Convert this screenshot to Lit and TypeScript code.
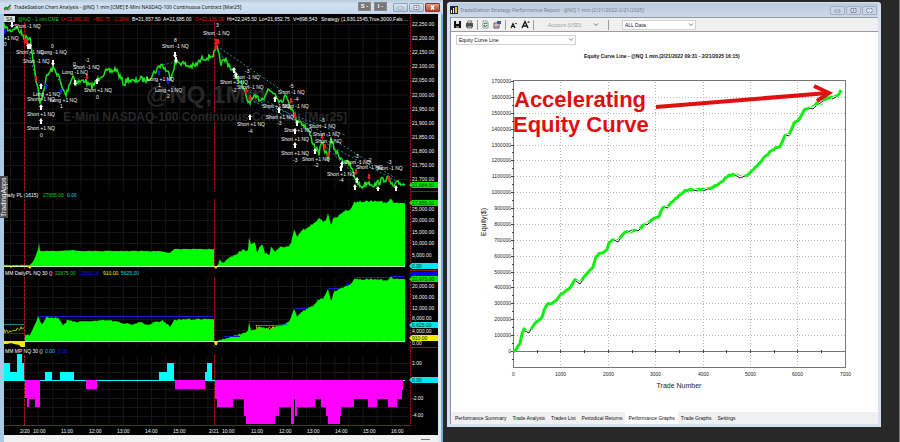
import { LitElement, html, svg, css } from "lit";
import { customElement } from "lit/decorators.js";

type Pt = [number, number];

const toPoints = (pts: Pt[]) => pts.map(([x, y]) => `${x.toFixed(1)},${y.toFixed(1)}`).join(" ");

/* Fills a coarse series with bar-to-bar noise, the same on every render. */
function densify(pts: Pt[], amp: number, step = 1): Pt[] {
  const out: Pt[] = [];
  let seed = 7;
  for (let i = 0; i < pts.length - 1; i++) {
    const [x0, y0] = pts[i];
    const [x1, y1] = pts[i + 1];
    for (let x = x0; x < x1; x += step) {
      seed = (seed * 16807) % 2147483647;
      const noise = (seed / 2147483647 - 0.5) * 2 * amp;
      out.push([x, y0 + ((y1 - y0) * (x - x0)) / (x1 - x0) + noise]);
    }
  }
  out.push(pts[pts.length - 1]);
  return out;
}

const area = (pts: Pt[], base: number, amp: number) => {
  const d = densify(pts, amp);
  return toPoints([[pts[0][0], base], ...d, [pts[pts.length - 1][0], base]]);
};

const PRICE: Pt[] = [
  [4, 26], [10, 31], [16, 27], [22, 34], [25, 38], [30, 37], [32, 50], [34, 65], [36, 80], [38, 90], [40, 104],
  [43, 92], [47, 76], [53, 68], [58, 74], [62, 88], [66, 95], [70, 82], [73, 76], [76, 82], [80, 82], [85, 80],
  [88, 85], [92, 86], [97, 82], [100, 76], [106, 72], [112, 71], [116, 69], [120, 77], [124, 84], [128, 79],
  [134, 82], [140, 79], [146, 80], [152, 75], [158, 68], [161, 64], [166, 70], [171, 77], [175, 63], [180, 62],
  [188, 66], [195, 66], [203, 58], [209, 57], [214, 54], [217, 49], [221, 63], [226, 60], [232, 70], [237, 76],
  [243, 88], [248, 102], [255, 98], [262, 99], [268, 90], [275, 93], [280, 101], [287, 96], [291, 108], [296, 118],
  [303, 124], [308, 130], [314, 145], [319, 153], [322, 143], [328, 158], [331, 140], [336, 152], [343, 160],
  [350, 165], [356, 180], [361, 187], [368, 182], [375, 185], [382, 180], [388, 178], [393, 187], [398, 183], [405, 184],
];

const DAILY_1: Pt[] = [
  [4, 265], [30, 265], [34, 260], [37, 252], [38, 250], [39, 243], [40, 251], [60, 251], [72, 250], [80, 251],
  [150, 251], [160, 251], [169, 253], [172, 251], [174, 249], [214, 249],
];
const DAILY_2: Pt[] = [
  [217, 266], [220, 260], [223, 263], [228, 258], [235, 255], [243, 249], [248, 251], [249, 237], [251, 245],
  [255, 242], [257, 252], [262, 244], [265, 253], [269, 255], [271, 247], [275, 252], [281, 246], [284, 247],
  [288, 246], [291, 243], [294, 230], [297, 236], [303, 230], [308, 228], [314, 222], [319, 219], [323, 222],
  [326, 220], [328, 213], [331, 225], [333, 219], [338, 216], [344, 211], [349, 211], [354, 203], [360, 201],
  [375, 201], [388, 202], [391, 199], [395, 203], [405, 203],
];
const MM_1: Pt[] = [
  [25, 335], [30, 335], [33, 328], [36, 322], [38, 316], [42, 325], [46, 317], [58, 318], [63, 325], [68, 320],
  [75, 322], [90, 321], [105, 320], [120, 322], [131, 325], [140, 322], [148, 325], [155, 322], [163, 321],
  [170, 326], [174, 320], [185, 319], [214, 319],
];
const MM_2: Pt[] = [
  [217, 341], [230, 337], [240, 334], [248, 331], [249, 322], [251, 331], [260, 327], [270, 329], [275, 327],
  [285, 324], [290, 320], [294, 309], [297, 316], [305, 310], [312, 306], [318, 300], [323, 299], [328, 289],
  [331, 301], [334, 292], [340, 288], [348, 286], [355, 279], [370, 279], [388, 280], [391, 277], [395, 279], [405, 279],
];

/* [from, to, edge] for each step of the market-position histogram */
const LONG_STEPS = [
  [4, 10, 363], [10, 17, 372], [17, 22, 354], [22, 24, 363], [45, 52, 372], [60, 74, 372], [159, 167, 372],
  [167, 174, 363], [205, 207, 372], [207, 212, 363],
];
const SHORT_STEPS = [
  [25, 27, 398], [27, 29, 407], [29, 35, 399], [35, 40, 407], [86, 97, 389], [175, 205, 389], [215, 217, 399],
  [217, 233, 407], [233, 244, 399], [244, 246, 416], [246, 275, 424], [275, 279, 416], [279, 291, 407],
  [291, 294, 424], [294, 295, 399], [295, 297, 416], [297, 315, 407], [315, 321, 399], [321, 326, 407], [326, 328, 416],
  [328, 340, 424], [340, 341, 416], [341, 354, 407], [354, 368, 399], [368, 377, 407], [377, 388, 399],
  [388, 397, 407], [397, 402, 399], [402, 403, 390],
];

const S = "Short -1 NQ";
const P = "Short +1 NQ";
const L = "Long +1 NQ";
const TRADES: [string, number, number][] = [
  [S, 14, 28], ["+1 NQ", 4, 40], ["0", 4, 46], [P, 16, 54], ["Long -1 NQ", 41, 54],
  ["0", 51, 48], [S, 23, 63], ["0", 73, 66], ["-1", 85, 62], [S, 73, 69], ["Long -1 NQ", 62, 74], [P, 84, 92],
  ["0", 96, 99], [L, 33, 96], [P, 27, 101], [L, 50, 102], ["1", 60, 108], [P, 27, 116], [P, 27, 130], ["0", 40, 137],
  [L, 147, 81], ["1", 158, 87], [L, 155, 92], ["2", 167, 98], ["8", 174, 42], [S, 162, 48],
  ["3", 216, 27], [S, 203, 35], ["-3", 245, 73], [S, 233, 79],
  [P, 220, 84], [S, 237, 89], ["-2", 232, 92], ["-5", 289, 88], [S, 278, 94],
  ["-4", 294, 101], [P, 262, 108], [S, 282, 108], [P, 237, 126], ["-4", 248, 133], [P, 266, 119], ["-3", 277, 125],
  [P, 284, 132], [P, 281, 141], [P, 281, 155], ["-3", 293, 162], [P, 302, 161], ["-2", 314, 167],
  ["-3", 320, 122], [S, 309, 128], [S, 313, 136], [S, 315, 143], [P, 327, 176], ["-4", 339, 182],
  ["-3", 354, 158], [S, 344, 164], ["-2", 367, 162], [S, 356, 169], ["-3", 387, 164], [S, 376, 170],
];

type Mark = [number, number, "up" | "down", string];
const MARKS: Mark[] = [
  [12, 25, "down", "w"], [5, 31, "up", "b"], [25, 41, "down", "r"], [27, 42, "down", "r"], [28, 46, "up", "w"],
  [30, 46, "up", "w"], [53, 63, "down", "w"], [36, 79, "down", "r"], [46, 86, "up", "b"], [61, 91, "up", "b"],
  [41, 86, "up", "w"], [41, 107, "up", "w"], [41, 121, "up", "w"], [75, 83, "down", "w"], [87, 77, "down", "r"],
  [97, 81, "up", "w"], [159, 72, "up", "b"], [168, 81, "up", "b"], [175, 55, "down", "w"], [176, 60, "down", "w"],
  [216, 42, "down", "r"], [218, 42, "down", "r"], [216, 47, "down", "r"], [234, 70, "up", "w"], [236, 75, "up", "w"],
  [246, 91, "down", "r"], [250, 98, "down", "r"], [250, 117, "up", "w"], [275, 99, "up", "w"], [279, 110, "up", "w"],
  [291, 101, "down", "r"], [295, 116, "down", "r"], [295, 131, "up", "w"], [295, 145, "up", "w"], [297, 123, "up", "w"],
  [315, 151, "up", "w"], [322, 137, "down", "r"], [325, 147, "down", "r"], [328, 155, "down", "r"], [342, 164, "up", "w"],
  [341, 168, "up", "w"], [356, 172, "down", "r"], [357, 180, "up", "w"], [355, 187, "up", "w"], [369, 177, "down", "r"],
  [389, 179, "down", "r"], [378, 189, "up", "w"], [396, 188, "up", "w"],
];
const MARK_PATHS = {
  up: "M0 -3 L2 0 H1 V3 H-1 V0 H-2 Z",
  down: "M0 3 L2 0 H1 V-3 H-1 V0 H-2 Z",
};

const QUOTE: [string, number, string][] = [
  ["@NQ - 1 min", 18, "g"], ["CME", 48, "g"], ["L=21,660.00", 61, "r"], ["-481.75", 93, "r"], ["-2.18%", 113, "r"],
  ["B=21,657.50", 132, "w"], ["A=21,685.00", 163, "w"], ["O=22,136.00", 195, "r"], ["Hi=22,245.50", 227, "w"],
  ["Lo=21,652.75", 259, "w"], ["V=698,543", 293, "w"], ["Strategy (1,930,1545,True,3000,Fals ...", 321, "w"],
];
const TIMES: [string, number][] = [
  ["2/20", 20], ["10:00", 33], ["11:00", 61], ["12:00", 89], ["13:00", 117], ["14:00", 145], ["15:00", 173],
  ["2/21", 209], ["10:00", 222], ["11:00", 251], ["12:00", 279], ["13:00", 307], ["14:00", 335], ["15:00", 363],
  ["16:00", 391],
];
const PRICES = [
  "22,250.00", "22,200.00", "22,150.00", "22,100.00", "22,050.00", "22,000.00", "21,950.00", "21,900.00",
  "21,850.00", "21,800.00", "21,750.00", "21,700.00",
];
const range = (n: number) => Array.from({ length: n }, (_, i) => i);

@customElement("chart-window")
class ChartWindow extends LitElement {
  static styles = css`
    :host { display: flex; flex-direction: column; position: relative; background: #f0f0f0; font-family: "Liberation Sans", Arial, sans-serif; }
    .title { display: flex; align-items: center; gap: 3px; height: 14px; padding: 0 3px 0 4px; box-sizing: border-box; background: linear-gradient(#b9cbdc, #d3e2f1 30%, #c3d6ea); color: #111; }
    .logo { width: 7px; height: 7px; flex: none; }
    h1 { flex: 1; margin: 0; font: 5px/14px "Noto Sans", "Open Sans", sans-serif; white-space: nowrap; overflow: hidden; }
    .tool { width: 13px; height: 9px; margin: 0 0 2px; padding: 0; border: 1px solid #888; background: #777; color: #fff; font: bold 6px/7px "Liberation Sans", sans-serif; }
    .controls { display: flex; gap: 1px; margin-left: 3px; }
    .controls button { display: grid; place-items: center; width: 15px; height: 9px; padding: 0; border: 1px solid #8fa1b5; border-radius: 1px; background: linear-gradient(#d9e6f3, #b4c8dd); }
    .controls .close { background: linear-gradient(#e09a88, #bf3c24); border-color: #80392c; }
    .controls svg { width: 7px; height: 5px; }
    .body { display: flex; flex-direction: column; background: #000; border-left: 4px solid #a9c9e6; border-right: 3px solid #dce9f5; box-shadow: 2px 0 #67b8de; margin-right: 2px; }
    .body > svg { display: block; width: 100%; }
    .status { flex: 1; min-height: 7px; margin-right: 2px; border-left: 4px solid #a9c9e6; border-right: 3px solid #dce9f5; box-shadow: 2px 0 #67b8de; display: flex; justify-content: flex-end; }
    .status i { width: 9px; height: 1px; margin: 4px 8px 0 0; background: #777; }
    .side { position: absolute; left: 0; top: 176px; width: 8px; height: 42px; padding: 0; border: 0; background: #4a4a4a; color: #fff; font: 7px/8px "Liberation Sans", sans-serif; writing-mode: vertical-rl; transform: rotate(180deg); white-space: nowrap; }
    text { font-size: 5px; fill: #f4f4f4; }
    .mark-big { font-size: 24px; font-weight: bold; fill: #282828; }
    .mark-small { font-size: 12px; font-weight: bold; fill: #282828; }
    .g { fill: #18d018; } .r { fill: #f01818; } .w { fill: #fff; } .b { fill: #1414ff; } .c { fill: #19d5e8; } .y { fill: #f0ea00; }
    .ink { fill: #003300; }
    .grid { stroke: #161616; stroke-width: 1; }
    .session { stroke: #b01414; stroke-width: 1; stroke-dasharray: 3 1; }
    .axis { stroke: #a01010; stroke-width: 1; }
    .dots { stroke-dasharray: 2 1; }
    .price { fill: none; stroke: #1fe01f; stroke-width: 1.5; }
    .fill { fill: #00ff00; }
    .base { stroke: #b9ffb9; stroke-width: 1; }
    .link { stroke: #2a8c98; stroke-width: 1; stroke-dasharray: 2 2; fill: none; }
    .blue { stroke: #1a1ad0; stroke-width: 1; fill: none; }
    .teal { stroke: #158a96; stroke-width: 1; fill: none; }
    .gold { stroke: #b5ad00; stroke-width: 1; fill: none; }
    .long { fill: #00ffff; } .short { fill: #ff00ff; }
    .tag-g { fill: #00e400; } .tag-c { fill: #00e5f2; } .tag-y { fill: #f2ee00; } .tag-b { fill: #0000e6; }
  `;

  private frame(top: number, bottom: number, rows: number[]) {
    return svg`
      ${range(28).map((i) => svg`<line class="grid" x1=${10.5 + i * 14.1} x2=${10.5 + i * 14.1} y1=${top + 9} y2=${bottom} />`)}
      ${rows.map((y) => svg`<line class="grid" x1="4" x2="408" y1=${y} y2=${y} />`)}
      ${[24.5, 214.5].map((x) => svg`<line class="session" x1=${x} x2=${x} y1=${top + 8} y2=${bottom} />`)}
      <line class="axis dots" x1="410.5" x2="410.5" y1=${top} y2=${bottom} />`;
  }

  private tag(y: number, cls: string, label: string) {
    return svg`<path class=${cls} d="M409 ${y} l3 -3 H438 v6 H412 Z" /><text class="ink" x="412" y=${y + 2}>${label}</text>`;
  }

  private scale(rows: [string, number][]) {
    return rows.map(([t, y]) => svg`<text x="412" y=${y + 2}>${t}</text>`);
  }

  private heading(y: number, parts: [string, number, string][]) {
    return parts.map(([t, x, c]) => svg`<text class=${c} x=${x} y=${y}>${t}</text>`);
  }

  render() {
    return html`
      <header class="title">
        <svg class="logo" viewBox="0 0 8 8"><path d="M0 6 L2 4 L4 5 L8 1" fill="none" stroke="#1b8a2c" stroke-width="2" /><path d="M0 7 L3 6 L5 7 L8 4" fill="none" stroke="#c02020" /></svg>
        <h1>TradeStation Chart Analysis - @NQ 1 min [CME] E-Mini NASDAQ-100 Continuous Contract [Mar25]</h1>
        <button class="tool" aria-label="Symbol link">S -</button>
        <button class="tool" aria-label="Interval link">I -</button>
        <div class="controls">
          <button aria-label="Minimize"><svg viewBox="0 0 7 5"><path d="M1 2h5v2h-5z" fill="#fff" stroke="#667" stroke-width=".5" /></svg></button>
          <button aria-label="Restore"><svg viewBox="0 0 7 5"><path d="M1 .5h5v4h-5z M3 2h1v1h-1z" fill="#fff" stroke="#667" stroke-width=".7" /></svg></button>
          <button class="close" aria-label="Close"><svg viewBox="0 0 7 5"><path d="M2 .5 L5 4.5 M5 .5 L2 4.5" stroke="#fff" stroke-width="1.3" /></svg></button>
        </div>
      </header>
      <div class="body">
        <svg viewBox="4 14 434 177">
          ${this.frame(14, 191, range(12).map((i) => 24.5 + i * 14.1))}
          <text class="mark-big" x="146" y="103">@NQ,1Min</text>
          <text class="mark-small" x="63" y="121">E-Mini NASDAQ-100 Continuous Contract [Mar25]</text>
          <rect x="4" y="16" width="11" height="6" fill="#d8d8d8" /><text x="6" y="21" class="ink">SA</text>
          ${this.heading(21, QUOTE)}
          <path class="link" d="M217 46 L290 96 M217 50 L262 103 L345 135 M243 88 L318 130 L395 178 M250 100 L300 122 L352 172 M320 140 L398 182 M25 38 L40 95 M159 66 L175 62 M53 68 L66 95" />
          <polyline class="price" points=${toPoints(densify(PRICE, 3))} />
          ${MARKS.map(([x, y, dir, c]) => svg`<path class=${c} d=${MARK_PATHS[dir]} transform="translate(${x} ${y})" />`)}
          ${TRADES.map(([t, x, y]) => svg`<text x=${x} y=${y}>${t}</text>`)}
          ${this.scale(PRICES.map((p, i): [string, number] => [p, 24 + Math.round(i * 14.1)]))}
          ${this.tag(185, "tag-g", "21,684.50")}
        </svg>
        <svg viewBox="4 191 434 78">
          ${this.frame(191, 269, [209.5, 220.5, 232.5, 243.5, 255.5])}
          <line class="axis" x1="410" x2="438" y1="191.5" y2="191.5" />
          ${this.heading(197, [["Daily PL (1615)", 4, "w"], ["27655.00", 43, "g"], ["0.00", 67, "c"]])}
          <polygon class="fill" points=${area(DAILY_1, 266, 0.4)} />
          <polygon class="fill" points=${area(DAILY_2, 266, 1.2)} />
          <line class="base" x1="4" x2="405" y1="266.5" y2="266.5" />
          <path class="y" d="M9 266h4l-2 2z M27 266h5l-2 3z M214 266h4l-2 3z" />
          ${this.scale([["25,000.00", 209], ["20,000.00", 220], ["15,000.00", 232], ["10,000.00", 243], ["5,000.00", 255]])}
          ${this.tag(203, "tag-g", "27,655.00")} ${this.tag(266, "tag-c", "0.00")}
        </svg>
        <svg viewBox="4 269 434 78">
          ${this.frame(269, 347, [286.5, 297.5, 308.5, 319.5, 330.5])}
          <line class="axis" x1="410" x2="438" y1="270.5" y2="270.5" />
          ${this.heading(275, [["MM DailyPL NQ 30 ()", 5, "w"], ["22675.00", 55, "g"], ["23505.00", 79, "b"], ["910.00", 103, "y"], ["5625.00", 121, "c"]])}
          <polygon class="fill" points=${area(MM_1, 341, 0.9)} />
          <polygon class="fill" points=${area(MM_2, 341, 0.9)} />
          <path class="blue" d="M4 333.5H24 M38 316.5H214 M224 336.5H240 M249 321.5H272 M295 308.5H307 M316 299.5H320 M328 288.5H340 M346 284.5H350 M355 277.5H390 V276.5H405" />
          <path class="teal" d="M4 324.5H24 M256 325.5H276 L288 324.5" />
          <polyline class="gold" points=${toPoints(densify([[4, 331], [9, 332], [13, 330], [18, 329], [24, 328]], 2, 1))} />
          <polyline class="gold" points=${toPoints(densify([[256, 327], [262, 330], [269, 328], [276, 328]], 2, 1))} />
          <path class="y" d="M4 341H25V347H21L19 345 14 344 11 343 7 344H4Z M214 341h4l-1 4h-2z" />
          <line class="base" x1="25" x2="405" y1="341.5" y2="341.5" />
          ${this.scale([["20,000.00", 286], ["16,000.00", 297], ["12,000.00", 308], ["8,000.00", 318], ["4,000.00", 331], ["0.00", 343]])}
          ${this.tag(275, "tag-b", "")} ${this.tag(279, "tag-g", "22,675.00")}
          ${this.tag(325, "tag-c", "6,625.00")} ${this.tag(338, "tag-y", "910.00")}
        </svg>
        <svg viewBox="4 347 434 88">
          ${this.frame(347, 425, [363.5, 372.5, 389.5, 398.5, 407.5, 416.5])}
          <line class="axis" x1="410" x2="438" y1="347.5" y2="347.5" />
          <line class="axis" x1="4" x2="411" y1="425.5" y2="425.5" />
          ${this.heading(353, [["MM MP NQ 30 ()", 5, "w"], ["0.00", 45, "c"], ["0.00", 58, "b"]])}
          <rect class="long" x="4" y="380" width="401" height="1" />
          ${LONG_STEPS.map(([a, b, y]) => svg`<rect class="long" x=${a} y=${y} width=${b - a} height=${381 - y} />`)}
          ${SHORT_STEPS.map(([a, b, y]) => svg`<rect class="short" x=${a} y="380" width=${b - a} height=${y - 380} />`)}
          ${this.scale([["2.00", 363], ["-2.00", 398], ["-4.00", 415]])}
          ${this.tag(380, "tag-c", "0.00")}
          ${TIMES.map(([t, x]) => svg`<text x=${x} y="433">${t}</text>`)}
        </svg>
      </div>
      <div class="status"><i></i></div>
      <button class="side">TradingApps</button>
    `;
  }
}

const EQUITY: Pt[] = [
  [513, 351], [516, 350], [520, 343], [522, 334], [524, 329], [528, 332], [531, 329], [535, 323], [538, 321],
  [542, 317], [545, 308], [548, 303], [552, 304], [557, 299], [561, 294], [565, 291], [569, 289], [575, 280],
  [580, 283], [583, 278], [586, 274], [588, 273], [593, 267], [596, 257], [599, 254], [603, 253], [607, 249],
  [609, 243], [613, 240], [618, 241], [623, 234], [627, 231], [629, 232], [635, 230], [638, 231], [643, 225],
  [647, 224], [653, 219], [659, 216], [663, 207], [667, 208], [673, 201], [679, 196], [685, 191], [690, 189],
  [697, 190], [704, 190], [711, 188], [719, 184], [727, 177], [733, 174], [740, 177], [748, 175], [755, 168], [762, 160],
  [772, 150], [780, 146], [785, 135], [789, 135], [794, 123], [798, 121], [805, 109], [811, 108], [815, 106],
  [817, 103], [821, 103], [824, 99], [829, 98], [834, 97], [839, 94], [841, 90],
];
const DRAWDOWNS: Pt[][] = [
  [[525, 331], [529, 333], [531, 329]], [[576, 281], [580, 284], [582, 281]], [[614, 240], [618, 242], [620, 239]],
  [[628, 232], [632, 230]], [[636, 230], [638, 231], [640, 229]], [[645, 224], [647, 225], [649, 223]],
  [[665, 207], [668, 208]], [[693, 190], [698, 191]], [[703, 191], [708, 189]], [[735, 175], [740, 178], [745, 176]],
  [[786, 135], [789, 136]], [[809, 108], [813, 109], [816, 106]], [[819, 104], [823, 101]], [[832, 99], [836, 97]],
];

const chevron = html`<svg class="chev" viewBox="0 0 6 4"><path d="M1 .5 L3 2.5 L5 .5" fill="none" stroke="#555" stroke-width=".8" /></svg>`;

@customElement("report-window")
class ReportWindow extends LitElement {
  static styles = css`
    :host { display: flex; flex-direction: column; box-sizing: border-box; border: 3px solid #d5e1f1; border-top-width: 1px; border-radius: 3px 3px 0 0; background: #fff; font-family: "Liberation Sans", Arial, sans-serif; font-size: 5px; color: #111; }
    .title { display: flex; align-items: center; gap: 2px; height: 14px; padding: 0 1px 0 0; background: linear-gradient(#bccbdc, #cbd9e8); }
    .logo { width: 8px; height: 8px; flex: none; }
    h1 { flex: 1; margin: 0; font: 5px/14px "Noto Sans", "Open Sans", sans-serif; color: #748293; white-space: nowrap; overflow: hidden; }
    .controls { display: flex; gap: 1px; }
    .controls button { display: grid; place-items: center; width: 15px; height: 9px; padding: 0; border: 1px solid #9eafc2; border-radius: 1px; background: #c9d7e6; }
    .controls svg { width: 7px; height: 5px; }
    .inner { display: flex; flex-direction: column; flex: 1; border-left: 1px solid #8a8f96; }
    .tools { display: flex; align-items: center; gap: 3px; height: 15px; box-sizing: border-box; padding-left: 2px; border-top: 1px solid #999; border-bottom: 1px solid #9b9b9b; background: #f0f0f0; }
    .tools button { width: 9px; height: 9px; padding: 0; border: 0; background: none; }
    .tools button svg { display: block; width: 9px; height: 9px; }
    .rule { width: 1px; height: 10px; background: #999; }
    .pick { position: relative; display: flex; }
    .pick select { appearance: none; width: 100%; height: 10px; margin: 0; padding: 0 8px 0 2px; border: 1px solid #d2d2d2; border-radius: 0; background: #fff; color: #111; font: 5px/8px "Liberation Sans", Arial, sans-serif; }
    .pick select:disabled { background: #f0f0f0; border-color: #ececec; color: #999; opacity: 1; }
    .chev { position: absolute; right: 2px; top: 3px; width: 6px; height: 4px; pointer-events: none; }
    .account { width: 56px; margin-left: 8px; margin-right: 4px; }
    .data { width: 74px; margin-left: 10px; }
    .view { width: 120px; margin: 3px 0 0 5px; }
    .plot { display: block; width: 100%; }
    nav { display: flex; align-items: center; height: 12px; background: #f0f0f0; padding-left: 1px; }
    nav button { height: 10px; padding: 0 3px; border: 0; background: none; color: #111; font: 5px/10px "Liberation Sans", Arial, sans-serif; }
    nav .on { height: 12px; background: #fff; line-height: 12px; }
    text { font-size: 5px; fill: #222; }
    .head { font-weight: bold; fill: #111; }
    .name { font-size: 7px; }
    .note { font-size: 22px; font-weight: bold; fill: #e01010; }
    .frame { fill: none; stroke: #777; stroke-width: 1; }
    .grid { stroke: #b4b4b4; stroke-width: 1; stroke-dasharray: 1 2; }
    .tick { stroke: #444; stroke-width: 1; }
    .curve { fill: none; stroke: #10f010; stroke-width: 3; stroke-linejoin: round; }
    .dip { fill: none; stroke: #222; stroke-width: 1; }
    .under { fill: none; stroke: #fff; stroke-width: 3; }
    .arrow { fill: none; stroke: #e01010; stroke-width: 4; }
    .end { text-anchor: end; } .mid { text-anchor: middle; }
  `;

  render() {
    const rowY = (i: number) => 81.5 + Math.round(i * 15.88);
    const colX = (i: number) => 513.5 + Math.round(i * 47.4);
    const tabs = ["Performance Summary", "Trade Analysis", "Trades List", "Periodical Returns", "Performance Graphs", "Trade Graphs", "Settings"];
    return html`
      <header class="title">
        <svg class="logo" viewBox="0 0 8 8"><rect width="8" height="8" fill="#223" /><path d="M1 7V4h1v3z M3 7V2h1v5z" fill="#fff" /><path d="M5 7V1h2v6z" fill="#e8d020" /></svg>
        <h1>TradeStation Strategy Performance Report - @NQ 1 min (2/21/2022-2/21/2025)</h1>
        <div class="controls">
          <button aria-label="Minimize"><svg viewBox="0 0 7 5"><path d="M1 2h5v2h-5z" fill="#eef" stroke="#667" stroke-width=".6" /></svg></button>
          <button aria-label="Maximize"><svg viewBox="0 0 7 5"><path d="M1 .5h5v4h-5z M3 2h1v1h-1z" fill="#eef" stroke="#667" stroke-width=".7" /></svg></button>
          <button aria-label="Close"><svg viewBox="0 0 7 5"><path d="M1 .5h1.500l1 1 1-1h1.500v4h-1.500l-1-1-1 1h-1.500z" fill="#eef" stroke="#667" stroke-width=".6" /></svg></button>
        </div>
      </header>
      <div class="inner">
        <div class="tools">
          <button aria-label="Save"><svg viewBox="0 0 9 9"><path d="M1 1h7v7H1z" fill="#111" /><path d="M3 1h3v3H3z" fill="#ddd" /><path d="M3 6h3v2H3z" fill="#776" /></svg></button>
          <button aria-label="Print"><svg viewBox="0 0 9 9"><path d="M2 3 3 1h4L6 3z" fill="#fff" stroke="#444" stroke-width=".7" /><path d="M1 3h7v4H1z" fill="#555" /><path d="M2 6h5v2H2z" fill="#bbb" stroke="#333" stroke-width=".6" /></svg></button>
          <span class="rule"></span>
          <button aria-label="Refresh"><svg viewBox="0 0 9 9"><path d="M2 1h4l1 1v6H2z" fill="#fff" stroke="#777" stroke-width=".7" /><path d="M3 4q2-2 3 0M6 5q-2 3-3 0" fill="none" stroke="#0a8a30" stroke-width="1.200" /></svg></button>
          <button aria-label="Properties"><svg viewBox="0 0 9 9"><path d="M1 3h5v5H1z" fill="#fff" stroke="#334" stroke-width=".9" /><path d="M4 1h4v3H4z" fill="#335a9a" /><path d="M2 5h3M2 6.500h3" stroke="#a33" stroke-width=".7" /></svg></button>
          <span class="rule"></span>
          <button aria-label="Smaller text"><svg viewBox="0 0 9 9"><path d="M2 8 4 3.500 6 8M3 6.500h2.500" fill="none" stroke="#111" stroke-width="1.100" /><path d="M6 3h2L7 4.500z" fill="#111" /></svg></button>
          <button aria-label="Larger text"><svg viewBox="0 0 9 9"><path d="M1 8 4 1.500 7 8M2.500 6h3.500" fill="none" stroke="#111" stroke-width="1.300" /><path d="M6 2.500h3L7.500 1z" fill="#111" /></svg></button>
          <span class="rule"></span>
          <span class="pick account"><select disabled aria-label="Account currency"><option>Account (USD)</option></select>${chevron}</span>
          <span class="rule"></span>
          <span class="pick data"><select aria-label="Data range"><option>ALL Data</option></select>${chevron}</span>
        </div>
        <span class="pick view"><select aria-label="Graph"><option>Equity Curve Line</option></select>${chevron}</span>
        <svg class="plot" viewBox="451 45 427 367">
          <text class="head" x="584" y="58">Equity Curve Line - @NQ 1 min.(2/21/2022 09:31 - 2/21/2025 16:15)</text>
          ${range(17).map((i) => svg`<line class="grid" x1="514" x2="845" y1=${rowY(i + 1)} y2=${rowY(i + 1)} />`)}
          ${range(6).map((i) => svg`<line class="grid" x1=${colX(i + 1)} x2=${colX(i + 1)} y1="82" y2="367" />`)}
          <rect class="frame" x="513.5" y="80.5" width="332" height="287" />
          <line class="frame" x1="513" x2="845" y1="351.5" y2="351.5" />
          ${range(36).map((i) => svg`<line class="tick" x1=${i % 2 ? 512 : 511} x2="514" y1=${81.5 + Math.round(i * 7.94)} y2=${81.5 + Math.round(i * 7.94)} />`)}
          ${range(14).map((i) => svg`<line class="tick" x1=${513.5 + Math.round(i * 23.7)} x2=${513.5 + Math.round(i * 23.7)} y1="350" y2="353" />`)}
          ${range(18).map((i) => svg`<text class="end" x="511" y=${rowY(i) + 1}>${(17 - i) * 100000}</text>`)}
          ${range(8).map((i) => svg`<text class="mid" x=${colX(i)} y="376">${i * 1000}</text>`)}
          <text class="name mid" x="679" y="388">Trade Number</text>
          <text class="name mid" transform="translate(486 222) rotate(-90)">Equity($)</text>
          <polyline class="curve" points=${toPoints(densify(EQUITY, 0.7, 2))} />
          ${DRAWDOWNS.map((d) => svg`<polyline class="under" points=${toPoints(d)} /><polyline class="dip" points=${toPoints(d)} />`)}
          <text class="note" x="514" y="107">Accelerating</text>
          <text class="note" x="513" y="132">Equity Curve</text>
          <path class="arrow" d="M656 107 L828 93" />
          <path class="arrow" d="M814 86 L829 93 L817 101" />
        </svg>
        <nav>${tabs.map((t) => html`<button class=${t === "Performance Graphs" ? "on" : ""}>${t}</button>`)}</nav>
      </div>
    `;
  }
}

@customElement("app-root")
class AppRoot extends LitElement {
  static styles = css`
    :host { display: grid; grid-template-columns: 443fr 434fr; column-gap: 4px; padding-right: 18px; border-right: 1px solid #777; box-sizing: border-box; min-height: 100vh; background: #282828; align-items: stretch; }
    report-window { margin: 2px 0 14px; align-self: start; }
  `;
  render() {
    return html`<chart-window></chart-window><report-window></report-window>`;
  }
}
